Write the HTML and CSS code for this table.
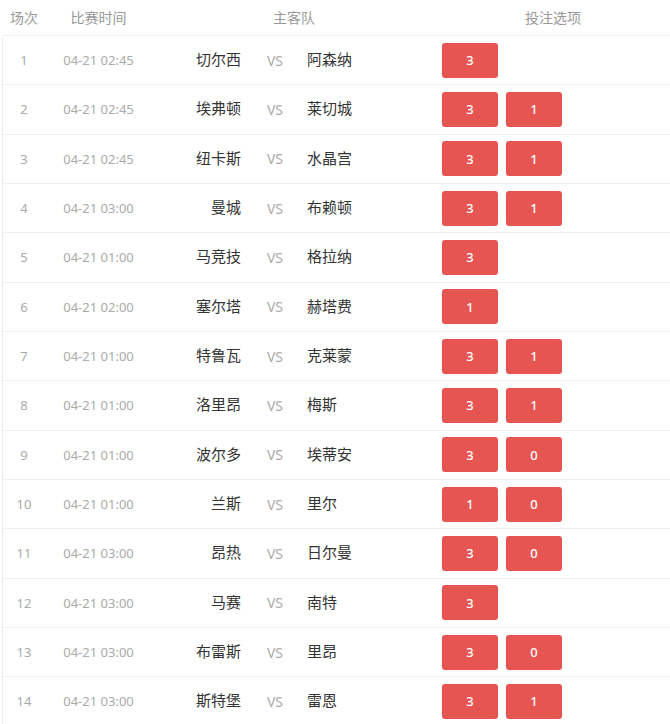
FILE: index.html
```html
<!DOCTYPE html>
<html lang="zh">
<head>
<meta charset="utf-8">
<link rel="stylesheet" href="styles.css">
</head>
<body>
<div class="table">
  <div class="head">
    <div class="h-no">场次</div>
    <div class="h-time">比赛时间</div>
    <div class="h-teams">主客队</div>
    <div class="h-opts">投注选项</div>
  </div>
  <div class="row"><div class="no">1</div><div class="time">04-21 02:45</div><div class="home">切尔西</div><div class="vs">VS</div><div class="away">阿森纳</div><div class="opts"><span class="btn">3</span></div></div>
  <div class="row"><div class="no">2</div><div class="time">04-21 02:45</div><div class="home">埃弗顿</div><div class="vs">VS</div><div class="away">莱切城</div><div class="opts"><span class="btn">3</span><span class="btn">1</span></div></div>
  <div class="row"><div class="no">3</div><div class="time">04-21 02:45</div><div class="home">纽卡斯</div><div class="vs">VS</div><div class="away">水晶宫</div><div class="opts"><span class="btn">3</span><span class="btn">1</span></div></div>
  <div class="row"><div class="no">4</div><div class="time">04-21 03:00</div><div class="home">曼城</div><div class="vs">VS</div><div class="away">布赖顿</div><div class="opts"><span class="btn">3</span><span class="btn">1</span></div></div>
  <div class="row"><div class="no">5</div><div class="time">04-21 01:00</div><div class="home">马竞技</div><div class="vs">VS</div><div class="away">格拉纳</div><div class="opts"><span class="btn">3</span></div></div>
  <div class="row"><div class="no">6</div><div class="time">04-21 02:00</div><div class="home">塞尔塔</div><div class="vs">VS</div><div class="away">赫塔费</div><div class="opts"><span class="btn">1</span></div></div>
  <div class="row"><div class="no">7</div><div class="time">04-21 01:00</div><div class="home">特鲁瓦</div><div class="vs">VS</div><div class="away">克莱蒙</div><div class="opts"><span class="btn">3</span><span class="btn">1</span></div></div>
  <div class="row"><div class="no">8</div><div class="time">04-21 01:00</div><div class="home">洛里昂</div><div class="vs">VS</div><div class="away">梅斯</div><div class="opts"><span class="btn">3</span><span class="btn">1</span></div></div>
  <div class="row"><div class="no">9</div><div class="time">04-21 01:00</div><div class="home">波尔多</div><div class="vs">VS</div><div class="away">埃蒂安</div><div class="opts"><span class="btn">3</span><span class="btn">0</span></div></div>
  <div class="row"><div class="no">10</div><div class="time">04-21 01:00</div><div class="home">兰斯</div><div class="vs">VS</div><div class="away">里尔</div><div class="opts"><span class="btn">1</span><span class="btn">0</span></div></div>
  <div class="row"><div class="no">11</div><div class="time">04-21 03:00</div><div class="home">昂热</div><div class="vs">VS</div><div class="away">日尔曼</div><div class="opts"><span class="btn">3</span><span class="btn">0</span></div></div>
  <div class="row"><div class="no">12</div><div class="time">04-21 03:00</div><div class="home">马赛</div><div class="vs">VS</div><div class="away">南特</div><div class="opts"><span class="btn">3</span></div></div>
  <div class="row"><div class="no">13</div><div class="time">04-21 03:00</div><div class="home">布雷斯</div><div class="vs">VS</div><div class="away">里昂</div><div class="opts"><span class="btn">3</span><span class="btn">0</span></div></div>
  <div class="row"><div class="no">14</div><div class="time">04-21 03:00</div><div class="home">斯特堡</div><div class="vs">VS</div><div class="away">雷恩</div><div class="opts"><span class="btn">3</span><span class="btn">1</span></div></div>
</div>
</body>
</html>
```
FILE: styles.css
```css
html, body {
  margin: 0;
  padding: 0;
  background: #fff;
}
body {
  font-family: "Noto Sans", "Noto Sans CJK SC", sans-serif;
  overflow: hidden;
}
.table {
  margin-left: 3px;
  width: 667px;
}
.head {
  display: grid;
  grid-template-columns: 42px 107px 284px 1fr;
  height: 35px;
  border-bottom: 1px solid #eeeeee;
  align-items: center;
  font-size: 14px;
  color: #999;
  text-align: center;
  padding-bottom: 1px;
  box-sizing: border-box;
  height: 36px;
}
.row {
  display: grid;
  grid-template-columns: 42px 107px 101px 44px 139px 1fr;
  height: 48.33px;
  border-bottom: 1px solid #eeeeee;
  border-left: 1px solid #eeeeee;
  margin-left: -1px;
  align-items: center;
}
.no {
  text-align: center;
  font-size: 13px;
  color: #aaa;
}
.time {
  text-align: center;
  font-size: 13px;
  color: #aaa;
}
.home {
  text-align: right;
  padding-right: 12px;
  padding-bottom: 3px;
  font-size: 15px;
  color: #333;
}
.vs {
  text-align: center;
  font-size: 14px;
  color: #aaa;
}
.away {
  padding-left: 10px;
  padding-bottom: 3px;
  font-size: 15px;
  color: #333;
}
.opts {
  display: flex;
  gap: 8px;
  padding-left: 6px;
}
.btn {
  display: flex;
  align-items: center;
  justify-content: center;
  width: 56px;
  height: 35px;
  border-radius: 3px;
  background: #e65552;
  color: #fff;
  font-size: 13px;
  font-weight: 500;
}
```
